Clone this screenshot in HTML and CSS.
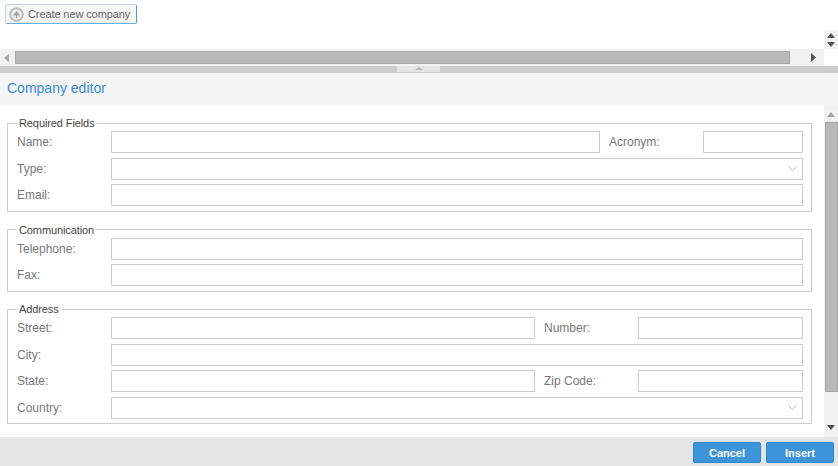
FILE: index.html
```html
<!DOCTYPE html>
<html lang="en">
<head>
<meta charset="utf-8">
<title>Company editor</title>
<link rel="stylesheet" href="styles.css">
</head>
<body>
<div class="top">
  <div class="top-main">
    <div class="toolbar">
      <button class="create" type="button">
        <svg class="create-icon" width="15" height="15" viewBox="0 0 15 15"><circle cx="7.500" cy="7.500" r="6.300" fill="#ececec" stroke="#bcbcbc" stroke-width="1.900"/><path d="M7.500 11V7.500M5.300 7.800 7.500 5l2.200 2.800z" fill="#a0a0a0" stroke="#a0a0a0" stroke-width="1.200"/></svg>
        <span>Create new company</span>
      </button>
    </div>
    <div class="hscroll">
      <svg class="arrow-h" width="5" height="8" viewBox="0 0 5 8"><path d="M5 0v8L0 4z" fill="#a6a6a6"/></svg>
      <div class="hthumb"></div>
      <svg class="arrow-h" width="5" height="9" viewBox="0 0 5 9"><path d="M0 0v9l5-4.500z" fill="#505050"/></svg>
    </div>
  </div>
  <div class="top-v">
    <div class="top-v-track">
      <svg width="8" height="5" viewBox="0 0 8 5"><path d="M0 5h8L4 0z" fill="#505050"/></svg>
      <svg width="8" height="5" viewBox="0 0 8 5"><path d="M0 0h8L4 5z" fill="#505050"/></svg>
    </div>
  </div>
</div>
<div class="splitter"><div class="handle"><svg width="8" height="3" viewBox="0 0 8 3"><path d="M0 3h8L4 0z" fill="#b8b8b8"/></svg></div></div>
<h1 class="title">Company editor</h1>
<div class="body">
  <form class="form">
    <fieldset class="group">
      <legend>Required Fields</legend>
      <div class="rows">
        <div class="row"><label class="lbl">Name:</label><input class="box grow"><label class="lbl lbl-2">Acronym:</label><input class="box w100"></div>
        <div class="row"><label class="lbl">Type:</label><div class="box grow select"><svg width="9" height="5" viewBox="0 0 9 5"><path d="M.5.500 4.500 4.500 8.500.500" fill="none" stroke="#bdbdbd" stroke-width="1"/></svg></div></div>
        <div class="row"><label class="lbl">Email:</label><input class="box grow"></div>
      </div>
    </fieldset>
    <fieldset class="group">
      <legend>Communication</legend>
      <div class="rows">
        <div class="row"><label class="lbl">Telephone:</label><input class="box grow"></div>
        <div class="row"><label class="lbl">Fax:</label><input class="box grow"></div>
      </div>
    </fieldset>
    <fieldset class="group">
      <legend>Address</legend>
      <div class="rows">
        <div class="row"><label class="lbl">Street:</label><input class="box grow"><label class="lbl lbl-2">Number:</label><input class="box w165"></div>
        <div class="row"><label class="lbl">City:</label><input class="box grow"></div>
        <div class="row"><label class="lbl">State:</label><input class="box grow"><label class="lbl lbl-2">Zip Code:</label><input class="box w165"></div>
        <div class="row"><label class="lbl">Country:</label><div class="box grow select"><svg width="9" height="5" viewBox="0 0 9 5"><path d="M.5.500 4.500 4.500 8.500.500" fill="none" stroke="#bdbdbd" stroke-width="1"/></svg></div></div>
      </div>
    </fieldset>
  </form>
  <div class="vscroll">
    <svg class="v-arrow" width="8" height="5" viewBox="0 0 8 5"><path d="M0 5h8L4 0z" fill="#a6a6a6"/></svg>
    <div class="vthumb"></div>
    <svg class="v-arrow-b" width="8" height="5" viewBox="0 0 8 5"><path d="M0 0h8L4 5z" fill="#505050"/></svg>
  </div>
</div>
<div class="footer">
  <button class="action" type="button">Cancel</button>
  <button class="action" type="button">Insert</button>
</div>
</body>
</html>
```
FILE: styles.css
```css
* { box-sizing: border-box; }
html, body { margin: 0; height: 100%; }
body {
  width: 838px;
  height: 466px;
  overflow: hidden;
  display: flex;
  flex-direction: column;
  background: #fff;
  font-family: "Liberation Sans", Arial, sans-serif;
  font-size: 12px;
  color: #777;
}
.top { height: 66px; display: flex; flex: none; }
.top-main { flex: 1; display: flex; flex-direction: column; min-width: 0; }
.toolbar { height: 49px; padding: 4px 0 0 5px; }
.create {
  height: 20px;
  width: 132px;
  display: flex;
  align-items: center;
  gap: 4px;
  padding: 0 0 0 3px;
  background: #f7f7f7;
  border: 1px solid #c4d2de;
  border-right-color: #4a9ad8;
  border-bottom-color: #6aaee0;
  border-radius: 2px;
  font: 11px "Liberation Sans", Arial, sans-serif;
  letter-spacing: -0.1px;
  color: #666;
  white-space: nowrap;
}
.create-icon { flex: none; }
.hscroll {
  height: 17px;
  background: #f1f1f1;
  display: flex;
  align-items: center;
  padding: 0 8px 0 4px;
}
.hthumb {
  width: 776px;
  height: 13px;
  margin-left: 6px;
  margin-right: 21px;
  background: #b9b9b9;
  border: 1px solid #a8a8a8;
}
.arrow-h { flex: none; }
.top-v { width: 14px; flex: none; padding-top: 30px; }
.top-v-track {
  height: 19px;
  background: #f1f1f1;
  display: flex;
  flex-direction: column;
  align-items: center;
  justify-content: center;
  gap: 4px;
}
.top-v-track svg { display: block; }
.splitter {
  height: 7px;
  flex: none;
  background: #cdcdcd;
  display: flex;
  justify-content: center;
}
.handle {
  width: 43px;
  height: 6px;
  margin-left: -1px;
  background: #e4e4e4;
  display: flex;
  justify-content: center;
  padding-top: 1px;
}
.handle svg { display: block; }
.title {
  margin: 0;
  height: 32px;
  flex: none;
  padding: 7px 0 0 7px;
  background: #f4f4f4;
  font-size: 14px;
  font-weight: 400;
  line-height: 16px;
  color: #3a8ddb;
}
.body { flex: 1; display: flex; min-height: 0; }
.form {
  flex: 1;
  min-width: 0;
  padding: 11.250px 12px 0 7px;
  display: flex;
  flex-direction: column;
  gap: 10.750px;
}
.group {
  margin: 0;
  padding: 1px 8px 4.500px 9px;
  border: 1px solid #cccccc;
  min-width: 0;
}
.group legend {
  margin-left: 0;
  padding: 0 2px;
  font-size: 11px;
  line-height: 14px;
  letter-spacing: -0.1px;
  color: #444;
}
.rows { display: grid; row-gap: 4.500px; }
.row { display: flex; align-items: center; height: 22px; }
.lbl { width: 94px; flex: none; }
.lbl-2 { margin-left: 9px; }
.box {
  height: 22px;
  display: block;
  padding: 0 6px;
  border: 1px solid #cccccc;
  background: #fff;
}
.grow { flex: 1; min-width: 0; }
.w100 { width: 100px; flex: none; }
.w165 { width: 165px; flex: none; }
.select { display: flex; align-items: center; justify-content: flex-end; padding-right: 5px; }
.vscroll {
  width: 14px;
  flex: none;
  background: #f1f1f1;
  display: flex;
  flex-direction: column;
  align-items: center;
  padding-top: 7px;
}
.vthumb {
  width: 13px;
  height: 270px;
  margin-top: 5px;
  margin-left: 1px;
  background: #b9b9b9;
  border: 1px solid #a8a8a8;
}
.v-arrow { flex: none; }
.v-arrow-b { flex: none; margin-top: auto; margin-bottom: 7px; }
.footer {
  height: 29px;
  flex: none;
  background: #e5e5e5;
  display: flex;
  justify-content: flex-end;
  align-items: flex-start;
  gap: 5px;
  padding: 5px 4px 0 0;
}
.action {
  width: 68px;
  height: 21px;
  padding: 0;
  background: #3d94d9;
  border: 1px solid #2a86d0;
  border-radius: 2px;
  color: #fff;
  font: 700 11px "Liberation Sans", Arial, sans-serif;
}
```
